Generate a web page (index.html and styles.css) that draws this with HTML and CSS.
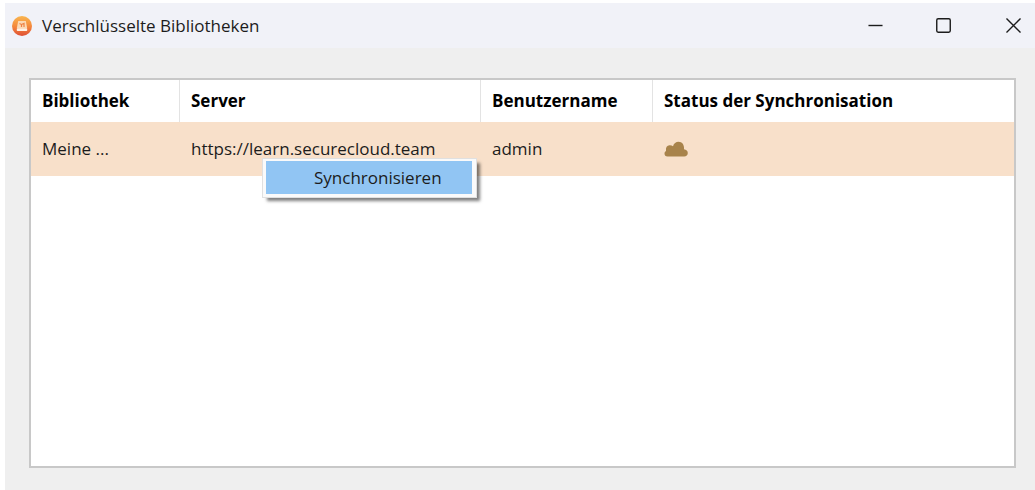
FILE: index.html
```html
<!DOCTYPE html>
<html lang="de">
	<head>
		<meta charset="UTF-8">
		<meta name="viewport" content="width=device-width, initial-scale=1.0">
		<title>Verschlüsselte Bibliotheken</title>
		<link rel="stylesheet" href="styles.css">
	</head>
	<body>
		<div class="window">
			<header class="titlebar">
				<svg class="logo" viewBox="0 0 20 20">
					<defs>
						<linearGradient id="logo-bg" x1="0" y1="0" x2="0" y2="1">
							<stop offset="0" stop-color="#f9b650"/>
							<stop offset="0.5" stop-color="#f58a3c"/>
							<stop offset="1" stop-color="#df4f35"/>
						</linearGradient>
					</defs>
					<circle cx="10" cy="10" r="10" fill="url(#logo-bg)"/>
					<path d="M6.2 5h7.6l1.4 7.2H4.8z" fill="#fbd9b4"/>
					<rect x="4.8" y="12.2" width="10.4" height="2.8" rx="0.8" fill="#fff3e6"/>
					<path d="M7.5 7.5l2 1v2.5M9.5 8.5l2.5-1v3.5" fill="none" stroke="#ee8144" stroke-width="1.2"/>
				</svg>
				<h1>Verschlüsselte Bibliotheken</h1>
				<div class="controls">
					<button type="button" aria-label="Minimieren">
						<svg viewBox="0 0 16 16"><path d="M0.5 8h15"/></svg>
					</button>
					<button type="button" aria-label="Maximieren">
						<svg viewBox="0 0 16 16"><rect x="0.8" y="0.8" width="14.4" height="14.4" rx="1.5"/></svg>
					</button>
					<button type="button" aria-label="Schließen">
						<svg viewBox="0 0 16 16"><path d="M0.5 0.5l15 15M15.5 0.5l-15 15"/></svg>
					</button>
				</div>
			</header>
			<main class="content">
				<div class="panel">
					<table>
						<colgroup>
							<col class="col-library">
							<col class="col-server">
							<col class="col-user">
							<col>
						</colgroup>
						<thead>
							<tr>
								<th scope="col">Bibliothek</th>
								<th scope="col">Server</th>
								<th scope="col">Benutzername</th>
								<th scope="col">Status der Synchronisation</th>
							</tr>
						</thead>
						<tbody>
							<tr class="selected">
								<td>Meine ...</td>
								<td>https://learn.securecloud.team</td>
								<td>admin</td>
								<td>
									<svg class="cloud" viewBox="0 0 24 16" role="img" aria-label="Cloud">
										<path d="M3.500 15.500C1.500 15.500 0.500 14.200 0.500 12.700c0-1.400 0.600-2.200 1.500-2.700C1.500 6.500 3 4.500 5.500 4.300c1.500-0.100 2.500 0.300 3.500 1C9.800 2.500 12 0.800 14.500 0.800c3.800 0 5.900 3 5.500 7.400 2.300 0.200 3.800 1.700 3.800 3.700s-1.500 3.600-3.600 3.600z"/>
									</svg>
								</td>
							</tr>
						</tbody>
					</table>
					<div class="menu" role="menu">
						<button type="button" role="menuitem">Synchronisieren</button>
					</div>
				</div>
			</main>
		</div>
	</body>
</html>
```
FILE: styles.css
```css
*{
	margin: 0;
	padding: 0;
	box-sizing: border-box;
}
body{
	display: flex;
	min-height: 100vh;
	padding: 3px 0 0 5px;
	background: #fff;
	color: #1c1c1c;
	font: 17px/24px "Open Sans", "Noto Sans", sans-serif;
}
.window{
	flex: 1;
	display: flex;
	flex-direction: column;
	background: #efefef;
}
/* title bar */
.titlebar{
	display: flex;
	align-items: center;
	height: 45px;
	padding-left: 7px;
	background: #f1f2f8;
}
.logo{
	width: 20px;
	height: 20px;
}
h1{
	margin-left: 10px;
	font-size: 17px;
	font-weight: normal;
}
.controls{
	display: flex;
	gap: 20px;
	margin-left: auto;
}
.controls button{
	display: flex;
	align-items: center;
	justify-content: center;
	width: 48px;
	height: 42px;
	border: none;
	background: none;
}
.controls button:last-child{
	padding-left: 4px;
}
.controls svg{
	width: 15px;
	height: 15px;
	fill: none;
	stroke: #1c1c1c;
	stroke-width: 1.5;
}
/* library list */
.content{
	flex: 1;
	display: flex;
	padding: 30px 19px 22px 24px;
}
.panel{
	position: relative;
	flex: 1;
	border: 2px solid #c8c8c8;
	background: #fff;
}
table{
	width: 100%;
	border-collapse: separate;
	border-spacing: 0;
	table-layout: fixed;
}
.col-library{
	width: 149px;
}
.col-server{
	width: 301px;
}
.col-user{
	width: 172px;
}
th, td{
	padding-left: 11px;
	text-align: left;
	white-space: nowrap;
}
th{
	height: 42px;
	border-right: 1px solid #e3e3e3;
	color: #000;
	font-weight: bold;
}
th:last-child{
	border-right: none;
}
td{
	height: 54px;
}
.selected{
	background: #f8e0ca;
}
.cloud{
	display: block;
	width: 24px;
	height: 16px;
	fill: #a8834b;
}
/* context menu */
.menu{
	position: absolute;
	top: 78px;
	left: 231px;
	padding: 2px 4px 3px 3px;
	border: 1px solid #e0e0e0;
	background: #fafafa;
	box-shadow: 4px 4px 3px -1px rgba(0,0,0,0.5);
}
.menu button{
	display: block;
	padding: 5px 30px 4px 48px;
	border: none;
	background: #91c5f3;
	color: #1c1c1c;
	font: inherit;
}
```
